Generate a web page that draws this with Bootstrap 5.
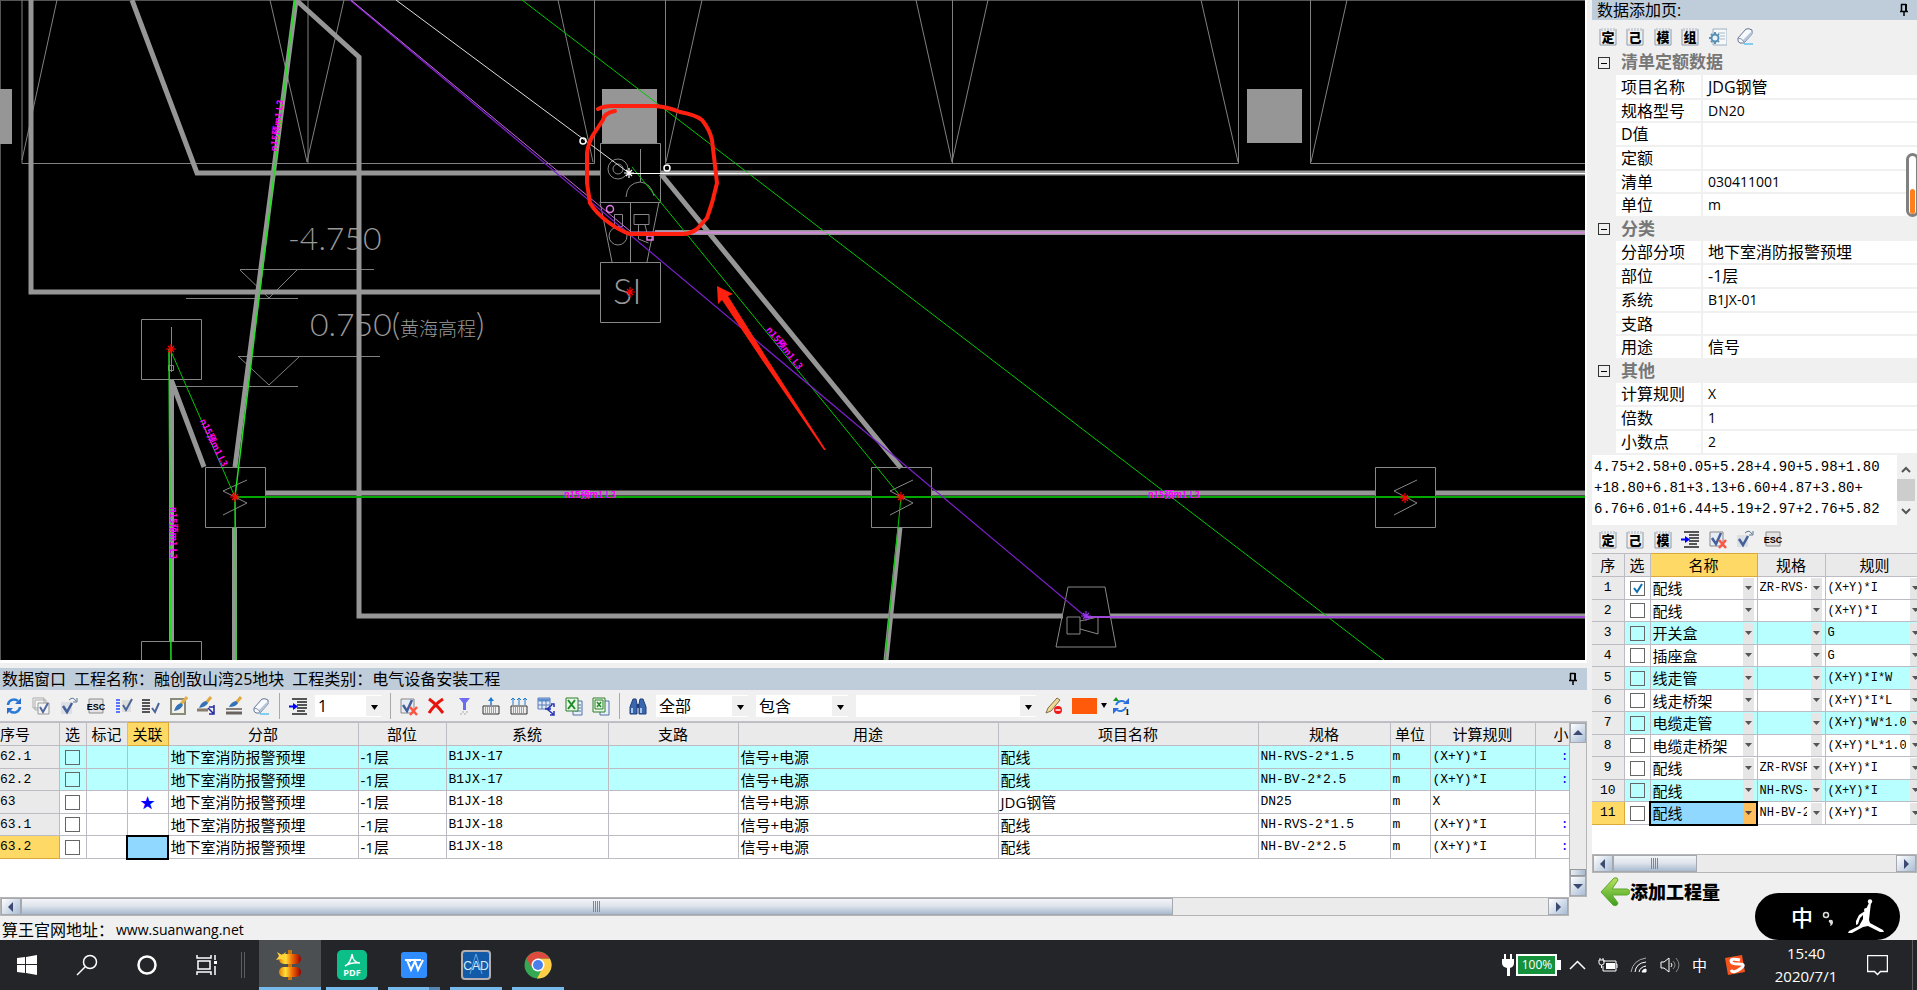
<!DOCTYPE html>
<html lang="zh-CN">
<head>
<meta charset="utf-8">
<meta name="viewport" content="width=device-width, initial-scale=1">
<title>算王 数据窗口</title>
<link href="https://cdn.jsdelivr.net/npm/bootstrap@5.3.0/dist/css/bootstrap.min.css" rel="stylesheet">
<style>
  body { font-family: "Open Sans", "Noto Sans CJK SC", sans-serif; font-size: 16px; line-height: 20px; color: #000; background: #f0f0f0; }
  .desk { height: 100vh; min-height: 700px; }
  .cad-view { background: #000; border-right: 2px solid #fff; border-bottom: 3px solid #fff; margin-bottom: 5px; min-height: 0; }
  .cad-view svg { display: block; width: 100%; height: 100%; }
  .left-dock { min-width: 0; }
  .right-dock { width: 325px; margin-left: 5px; background: #f0f0f0; overflow: hidden; }
  .dock-title { background: #bfcddb; height: 22px; padding: 0 2px; white-space: nowrap; }
  .right-dock .dock-title { height: 20px; padding: 0 5px; }
  .dock-title h2 { font-size: 16px; line-height: 20px; font-weight: 400; margin: 0; }
  .pin-btn { border: 0; background: none; padding: 0; width: 16px; height: 18px; line-height: 0; }
  .pin-btn svg { width: 10px; height: 14px; }

  .tool-row { height: 31px; }
  .right-dock .tool-row { padding-left: 2px; }
  .right-dock .mid-tools { height: 28px; }
  .tool-btn { border: 0; background: none; padding: 0; width: 27px; height: 26px; line-height: 0; border-radius: 2px; flex: none; }
  .tool-btn:nth-child(even) { width: 28px; }
  .tool-btn:hover { background: #d8e6f2; }
  .tool-btn svg { width: 18px; height: 20px; }
  .tool-split { width: 1px; height: 26px; background: #a8a8a8; flex: none; }
  .pick { appearance: none; border: 0; border-radius: 0; width: 92px; height: 22px; padding: 0 18px 0 3px; font-size: 16px; line-height: 20px; color: #000; flex: none;
    background: #fff url("data:image/svg+xml,%3Csvg xmlns='http://www.w3.org/2000/svg' width='16' height='20'%3E%3Crect width='16' height='20' fill='%23f0f0f0'/%3E%3Cpath d='M5 9h7l-3.500 5z'/%3E%3C/svg%3E") no-repeat right center; }
  .pick-s { width: 67px; }
  .pick-l { width: 180px; }
  .swatch { width: 25px; height: 16px; background: #ff5a0a; }
  .drop-tri { width: 0; height: 0; border: 3px solid transparent; border-top: 5px solid #000; border-bottom: 0; }

  .sheet { table-layout: fixed; border-collapse: collapse; color: #000; font-size: 15px; line-height: 18px; }
  .sheet th, .sheet td { border: 1px solid #bcbcc2; border-left-width: 0; padding: 0 0 0 2px; height: 22px; white-space: nowrap; overflow: hidden; font-weight: 400; }
  .sheet tr:nth-child(odd) > * { height: 23px; }
  .sheet thead th { background: #eaeaea; text-align: center; padding: 0; }
  .sheet tbody th { background: #eaeaea; }
  .sheet .num { font-family: "Liberation Mono", monospace; font-size: 13px; }
  .sheet .tint td { background: #b8ffff; }
  .sheet .hot, .sheet thead .hot { background: #ffd966; border-color: #d9a93a; }
  .sheet td.tick { padding: 0; text-align: center; }
  .sheet .focus-cell { background: #90d8ff !important; outline: 2px solid #000; outline-offset: -1px; }
  .sheet .star-mark { color: #00f; }
  .sheet .blue { color: #00f; text-align: right; }
  .sheet input[type=checkbox] { appearance: none; display: block; margin: 0 auto; width: 15px; height: 15px; border: 1px solid #666; background: transparent center no-repeat; }
  .sheet input[type=checkbox]:checked { background-color: #fff; background-image: url("data:image/svg+xml,%3Csvg xmlns='http://www.w3.org/2000/svg' width='13' height='13'%3E%3Cpath d='M3 6l3 4 5-8' fill='none' stroke='%230a70b0' stroke-width='2'/%3E%3C/svg%3E"); }
  .sheet-box { background: #fff; overflow: hidden; }
  .main-grid { height: 176px; border-top: 1px solid #c0c0c8; }

  .sb { background: #ebebeb; border: 1px solid #b5b5b5; flex: none; }
  .sb-v { width: 18px; }
  .sb-h { height: 19px; }
  .sb button { border: 1px solid #a5a8ae; padding: 0; line-height: 0; flex: none; background: linear-gradient(135deg, #fff, #a9bdd6); }
  .sb-v button { height: 20px; width: 100%; }
  .sb-h button { width: 20px; height: 100%; }
  .sb svg { width: 10px; height: 10px; fill: #3c4a72; }
  .thumb-h { background: linear-gradient(#f2f4f7, #dfe5ec 45%, #a8bacf); border: 1px solid #a5a8ae; }
  .thumb-v { height: 7px; background: linear-gradient(90deg, #e8edf3, #a8bacf); border: 1px solid #999; }
  .grip { width: 8px; height: 11px; background: repeating-linear-gradient(90deg, #7d8794 0 1px, transparent 1px 2px); }
  .corner { width: 18px; }
  .status-line { height: 24px; padding: 3px 2px 0; }
  .text-w { font-size: 14px; color: #000; text-decoration: none; margin-left: 2px; }

  .props { table-layout: fixed; border-collapse: collapse; width: 100%; font-size: 16px; line-height: 20px; }
  .props td, .props th { height: 24px; padding: 0 0 2px 5px; font-weight: 400; white-space: nowrap; overflow: hidden; }
  .props tr:nth-child(3n) > * { height: 23px; }
  .props td, .props th.key { background: #fff; border-bottom: 2px solid #f0f0f0; padding-bottom: 0; }
  .props td { border-left: 2px solid #f0f0f0; }
  .props .grp { font-weight: 700; color: #777; font-size: 17px; }
  .props .gut { background: #f0f0f0; padding: 0; text-align: center; border: 0; line-height: 0; }
  .props .val { font-size: 14px; }
  .fold { border: 1px solid #333; background: transparent; padding: 0; width: 12px; height: 12px; line-height: 0; display: inline-flex; align-items: center; justify-content: center; }
  .fold::before { content: ""; width: 6px; height: 1px; background: #000; }
  .calc { height: 70px; flex: none; }
  .calc textarea { border: 0; resize: none; overflow: hidden; padding: 2px 2px; font-family: "Liberation Mono", monospace; font-size: 14px; line-height: 21px; white-space: pre; min-width: 0; outline: 0; }
  .calc-bar { width: 20px; background: #f0f0f0; }
  .calc-bar i { display: block; width: 18px; height: 22px; background: #cdcdcd; }
  .calc-bar button { border: 0; background: none; padding: 0; width: 18px; height: 20px; line-height: 0; }
  .calc-bar svg { width: 10px; height: 7px; }
  .cell-pick { appearance: none; border: 0; border-radius: 0; width: 100%; height: 21px; padding: 0 18px 0 0; font-size: 15px; line-height: 20px; color: #000; display: block;
    background: transparent url("data:image/svg+xml,%3Csvg xmlns='http://www.w3.org/2000/svg' width='14' height='21'%3E%3Crect width='11' height='21' fill='%23e6e6e6'/%3E%3Cpath d='M2 8h7l-3.500 4z' fill='%23555'/%3E%3C/svg%3E") no-repeat right center; }
  .cell-pick.num { font-size: 12px !important; }
  .focus-cell .cell-pick { background-image: url("data:image/svg+xml,%3Csvg xmlns='http://www.w3.org/2000/svg' width='14' height='21'%3E%3Crect width='12' height='21' fill='%23ffbe5c'/%3E%3Cpath d='M2 8h7l-3.500 4z' fill='%23544'/%3E%3C/svg%3E"); }
  .side-grid { height: 301px; flex: none; }
  .side-table { width: 332px; }
  .side-thumb { width: 84px; }
  .add-btn { border: 0; background: none; padding: 0; font-weight: 900; font-size: 18px; line-height: 20px; color: #000; }
  .add-btn svg { width: 30px; height: 30px; }
  .ime-pill { width: 145px; height: 47px; right: 17px; bottom: 0; }
  .side-slider { width: 13px; height: 64px; right: -2px; top: 153px; border: 3px solid #808080; border-radius: 7px; background: #fff; line-height: 0; }
  .side-slider i { display: block; width: 5px; height: 25px; margin: 33px 1px 0; border-radius: 3px; background: #ff7f1e; }

  .taskbar { height: 50px; background: #232528; color: #fff; flex: none; }
  .taskbar button { border: 0; background: none; color: #fff; padding: 0; line-height: 0; flex: none; }
  .sys-group { margin-left: -3px; }
  .sys { width: 60px; height: 50px; }
  .sys svg { width: 22px; height: 22px; }
  .task-split { width: 4px; height: 26px; border: solid #5a5c5e; border-width: 0 1px; margin: 0 14px 0 4px; }
  .app { width: 62px; height: 50px; position: relative; }
  .app svg { width: 30px; height: 30px; }
  .app::after { content: ""; position: absolute; left: 5px; right: 5px; bottom: 0; height: 3px; background: #76b9ed; }
  .app.on { background: #4c4f52; }
  .app.on::after { left: 0; right: 0; }
  .app.multi::after { background: linear-gradient(90deg, #76b9ed 0 41px, #5585b0 41px); }
  .tray { height: 50px; }
  .tray svg { display: block; }
  .clock { font-size: 15px; line-height: 23px !important; width: 90px; }
  .han { font-size: 15px; line-height: 20px !important; }
</style>
</head>
<body>

<!-- shared toolbar glyphs -->
<svg width="0" height="0" class="position-absolute" aria-hidden="true">
  <defs>
    <symbol id="i-page" viewBox="0 0 18 20"><path d="M1 3h16v16H1z" fill="#eef0f3"/><path d="M1 3v16h16V3" fill="none" stroke="#8f9aa5"/><path d="M3 2v3M6 2v3M9 2v3M12 2v3M15 2v3" stroke="#a9b4c0"/></symbol>
    <symbol id="i-refresh" viewBox="0 0 18 20"><path d="M3 9a6 6 0 0 1 10-4M15 11a6 6 0 0 1-10 4" fill="none" stroke="#2a7ad8" stroke-width="2.500"/><path d="M16 2v6h-6zM2 18v-6h6z" fill="#2a6ccc"/></symbol>
    <symbol id="i-copychk" viewBox="0 0 18 20"><path d="M1 2h11v10H1zM3 4h11v10H3z" fill="#f6f6f6" stroke="#aaa"/><path d="M6 7h11v11H6z" fill="#f3f3f3" stroke="#999"/><path d="M8 11l3 5 5-9" fill="none" stroke="#5068a0" stroke-width="2"/></symbol>
    <symbol id="i-chkarrow" viewBox="0 0 18 20"><path d="M1 6h11v12H1z" fill="#dcdfe4"/><path d="M3 10l4 6 5-9" fill="none" stroke="#43609c" stroke-width="2.500"/><path d="M9 4q4-4 7 1M17 2v4h-4" fill="none" stroke="#5b7592"/></symbol>
    <symbol id="i-esc" viewBox="0 0 18 20"><path d="M2 3h14v14H2z" fill="#e4e2e2" stroke="#8d8d8d"/><text x="9" y="14" text-anchor="middle" font-family="Liberation Sans" font-weight="700" font-size="9">ESC</text></symbol>
    <symbol id="i-listchk" viewBox="0 0 18 20"><path d="M1 4h4M1 7h4M1 10h4M1 13h4M1 16h4" stroke="#2b4cff" stroke-width="1.500"/><path d="M7 4h9v12H7z" fill="#dedede"/><path d="M8 9l3 5 6-11" fill="none" stroke="#4b659b" stroke-width="2"/></symbol>
    <symbol id="i-listtick" viewBox="0 0 18 20"><path d="M0 4h8M0 7h8M0 10h8M0 13h8M0 16h8" stroke="#222" stroke-width="1.500"/><path d="M10 12l3 4 4-9" fill="none" stroke="#4b659b" stroke-width="2"/></symbol>
    <symbol id="i-brushdoc" viewBox="0 0 18 20"><path d="M1 3h14v15H1z" fill="#f2f2ea" stroke="#8b8b7b" stroke-width="2"/><path d="M17 1l-6 7" stroke="#e0b04c" stroke-width="3"/><path d="M11 7q-5 1-7 8 7-1 9-6z" fill="#3472b8"/></symbol>
    <symbol id="i-brushup" viewBox="0 0 18 20"><path d="M14 1L9 7" stroke="#e0a83c" stroke-width="3"/><path d="M9 5q-5 1-7 7 7-1 9-5z" fill="#3472b8"/><path d="M0 14h11" stroke="#887c6c" stroke-width="3"/><path d="M11 12l5 5M12 11h5M17 9v4M17 13v5h-5" stroke="#22299c" stroke-width="1.500" fill="none"/></symbol>
    <symbol id="i-brushlines" viewBox="0 0 18 20"><path d="M16 1l-5 6" stroke="#e0a83c" stroke-width="3"/><path d="M11 5Q6 6 4 11q7 0 9-4z" fill="#3472b8"/><path d="M1 13h16" stroke="#85807a" stroke-width="2"/><path d="M1 17h16" stroke="#6a6460" stroke-width="3"/></symbol>
    <symbol id="i-eraser" viewBox="0 0 18 20"><path d="M2 12L10 3q3-1 6 1l0 4-8 9H4q-3-1-2-5z" fill="#f8fafd" stroke="#5f7394"/><path d="M8 17l8-9V5l-9 9z" fill="#b4c4da"/><path d="M2 12q4 0 6 4" fill="none" stroke="#7f93ae"/><path d="M8 18h9" stroke="#15a8f0"/></symbol>
    <symbol id="i-indent" viewBox="0 0 18 20"><path d="M3 3h15M8 6h10M8 9h10M8 12h10M8 15h8M3 18h15" stroke="#222" stroke-width="1.500"/><path d="M0 10.500h6" stroke="#00f" stroke-width="2"/><path d="M4 7l5 3.500L4 14z" fill="#00f"/></symbol>
    <symbol id="i-chkx" viewBox="0 0 18 20"><path d="M1 3h13v14H1z" fill="#e6ecf4" stroke="#888"/><path d="M3 9l4 6 5-11" fill="none" stroke="#43609c" stroke-width="2.500"/><path d="M10 11l7 8M17 11l-7 8" stroke="#ff5540" stroke-width="2.500"/></symbol>
    <symbol id="i-redx" viewBox="0 0 18 20"><path d="M2 3q7 5 14 14M16 3Q8 8 2 17" fill="none" stroke="#e8140c" stroke-width="3"/></symbol>
    <symbol id="i-funnel" viewBox="0 0 18 20"><path d="M4 2h11l-4 5v7h-3V7z" fill="#6c6cf0"/><path d="M5 18h8M7 16h6" stroke="#aaa" stroke-dasharray="2"/></symbol>
    <symbol id="i-rowadd" viewBox="0 0 18 20"><path d="M1 10h16v8H1z" fill="#eee" stroke="#333"/><path d="M3 12h12M3 14h12M3 16h12" stroke="#555" stroke-dasharray="1"/><path d="M9 9V4" stroke="#1c7ad0" stroke-width="1.500"/><path d="M6 5l3-4 3 4z" fill="#1c7ad0"/></symbol>
    <symbol id="i-rowsadd" viewBox="0 0 18 20"><path d="M1 10h16v8H1z" fill="#eee" stroke="#333"/><path d="M3 12h12M3 14h12M3 16h12" stroke="#555" stroke-dasharray="1"/><path d="M3 9V2M9 9V2M15 9V2M1 4l2-2 2 2M7 4l2-2 2 2M13 4l2-2 2 2" fill="none" stroke="#1c7ad0"/></symbol>
    <symbol id="i-tablearrows" viewBox="0 0 18 20"><path d="M1 2h12v11H1z" fill="#dfe9f8" stroke="#5d7cb5"/><path d="M1 4h12" stroke="#5d8ed0" stroke-width="3"/><path d="M1 9h12M5 4v9M9 4v9" stroke="#5d7cb5"/><path d="M8 13h6M15 9l-5 4 6 5M14 8h3v3M17 15v4h-4" fill="none" stroke="#2733b5" stroke-width="1.500"/></symbol>
    <symbol id="i-excel" viewBox="0 0 18 20"><path d="M8 5h9v14H8z" fill="#e8f0ff" stroke="#5371a0"/><path d="M10 9h6M10 12h6M10 15h6" stroke="#5371a0"/><path d="M1 2h12v13H1z" fill="#e8f6e6" stroke="#2c7f2c"/><path d="M3 4l7 9M10 4l-7 9" stroke="#1e8a2a" stroke-width="2"/></symbol>
    <symbol id="i-excelx" viewBox="0 0 18 20"><path d="M8 5h9v14H8z" fill="#e8f0ff" stroke="#5371a0"/><path d="M1 2h12v14H1z" fill="#e8f6e6" stroke="#2c7f2c"/><path d="M3 4h8v9H3z" fill="none" stroke="#2c7f2c"/><path d="M5 6l4 5M9 6l-4 5" stroke="#1e8a2a" stroke-width="1.500"/></symbol>
    <symbol id="i-binoc" viewBox="0 0 18 20"><path d="M4 3h3l1 5v10H1v-7zM11 3h3l3 8v7h-7V8z" fill="#3a66ad" stroke="#1e3f7a"/><path d="M8 8h2v4H8z" fill="#1e3f7a"/><path d="M3 12v5M12 12v5" stroke="#a9c6ee" stroke-width="2"/></symbol>
    <symbol id="i-pencil" viewBox="0 0 18 20"><path d="M1 17l2-5 9-10 3 2-9 11z" fill="#f0d890" stroke="#7d7050"/><circle cx="13" cy="14" r="4" fill="#f01818"/><path d="M10.500 14h5" stroke="#fff" stroke-width="1.500"/></symbol>
    <symbol id="i-swap" viewBox="0 0 18 20"><path d="M4 9a6 6 0 0 1 9-3M14 11a6 6 0 0 1-9 3" fill="none" stroke="#2b7ae0" stroke-width="2"/><path d="M17 2v6h-6zM1 18v-6h6z" fill="#2b6ae0"/><path d="M1 5l3-4 3 4z" fill="#1d9520"/><text x="13" y="19" font-size="9" font-weight="700" font-family="Liberation Serif">1</text></symbol>
    <symbol id="i-gearpage" viewBox="0 0 18 20"><path d="M4 3h14v16H4z" fill="#f6f8fa" stroke="#9db0c0"/><path d="M9 7h7M11 10h5M11 13h5" stroke="#a5bccd"/><circle cx="6" cy="12" r="3.500" fill="#e8f2fa" stroke="#5a8fb4" stroke-width="2"/><path d="M6 6v2M6 16v2M0 12h2M2 8l1 1M2 16l1-1M10 8L9 9M10 16l-1-1" stroke="#5a8fb4" stroke-width="2"/></symbol>
    <symbol id="i-pin" viewBox="0 0 10 14"><path d="M2.500 1v7M2 1.500h5M1 8.500h8M5 9v4" fill="none" stroke="#000" stroke-width="1.500"/><path d="M6 1h2v7H6z"/></symbol>
    <symbol id="i-l" viewBox="0 0 10 10"><path d="M7 0v10L2 5z"/></symbol>
    <symbol id="i-r" viewBox="0 0 10 10"><path d="M3 0v10l5-5z"/></symbol>
    <symbol id="i-u" viewBox="0 0 10 10"><path d="M0 7h10L5 2z"/></symbol>
    <symbol id="i-d" viewBox="0 0 10 10"><path d="M0 3h10L5 8z"/></symbol>
    <symbol id="star" viewBox="-6 -6 12 12" overflow="visible"><path d="M-5 0h10M0-5v10M-3-3l6 6M3-3l-6 6"/></symbol>
  </defs>
</svg>

<div class="desk d-flex flex-column">
  <div class="d-flex flex-fill" style="min-height:0">

    <main class="left-dock d-flex flex-column flex-fill">
      <div class="cad-view flex-fill">
        <svg viewBox="0 0 1585 660" preserveAspectRatio="xMinYMin slice" role="img" aria-label="消防报警平面图">
          <path d="M0 .5H1585M.5 0V660" stroke="#555"/>
          <g fill="none" stroke="#808080">
            <path d="M22 0V163.500H594.500V0M57 0L22 160M308 0V163M270 0L307 162L344 0M558 0L593 162"/>
            <path d="M665.500 0V163.500H1238.500V0M702 0L666 162M952.500 0V163M916 0L952 162L988 0M1201 0L1238 162"/>
            <path d="M1585 163.500H1310.500V0M1347 0L1311 162"/>
            <path d="M240 269.500H374M240 270L269 298L297 270M186 298.500H298M238 356.500H380M239 357L269 385L299 357M175 386.500H298"/>
          </g>
          <path d="M0 89h12v55H0zM602 89h55v54h-55zM1247 89h55v54h-55z" fill="#969696"/>
          <g fill="none" stroke="#969696" stroke-width="5">
            <path d="M31 0V292H600M132 0L197 173H600M296 0L359 57V616H1063M1110 616H1585"/>
            <path d="M296 0L235 467M265 493H871M931 493H1375M1435 493H1585M234.500 527V660M171.500 380V641M172 382L204 467"/>
            <path d="M660 173H1585M655 232.500H1585M661 174L901 468M900 527L886 660"/>
          </g>
          <g fill="none" stroke="#888">
            <path d="M141.500 319.500h60v60h-60zM141.500 660V641.500h60V660M171.500 327V372M168.500 365.500h5v5h-5z"/>
            <path d="M205.500 467.500h60v60h-60zM871.500 467.500h60v60h-60zM1375.500 467.500h60v60h-60z"/>
            <path d="M247 480L223 491L247 503L223 515M913 480L890 491L913 503L890 515M1417 480L1394 491L1417 503L1394 515"/>
            <path d="M600.500 143.500h60v59h-60zM600 202L612 262M659 202L647 262M630.500 202V262M600.500 262.500h60v60h-60z"/>
            <circle cx="618" cy="169" r="10"/><circle cx="618" cy="169" r="5"/>
            <path d="M640.500 149V182M626 197Q627 183 640 182Q651 183 654 196"/>
            <circle cx="618" cy="236" r="9"/><path d="M614.500 214.500h8v12h-8zM634 214.500h15v10h-15zM638.500 225v14l10 4M645 225l3 12"/>
            <path d="M1068 587H1105L1116 647H1056zM1067 617h13v17h-13zM1080 621L1098 617V634L1080 629"/>
          </g>
          <g fill="none">
            <path d="M522 0L1384 660M632 167L901 497L885 660M170 349L235 497" stroke="#00c800"/>
            <path d="M295 0L235 497L236 660M169 349L171 660" stroke="#20e020" stroke-width="1.500"/>
            <path d="M235 497H1585" stroke="#00a800" stroke-width="2"/>
          </g>
          <path d="M350 0L1086 617" stroke="#7c20cc" stroke-width="1.200"/>
          <path d="M351 0L630 231" stroke="#c968e0"/>
          <path d="M1086 617H1585" stroke="#a04ad8" stroke-width="2"/>
          <path d="M630 232.500H1585" stroke="#d988e0" stroke-width="2"/>
          <path d="M396 0L629 173" stroke="#ddd"/><path d="M629 173.500H1585" stroke="#fff"/>
          <g fill="none" stroke-width="1.500"><circle cx="583" cy="141" r="3" stroke="#fff"/><circle cx="667" cy="168" r="3" stroke="#fff"/><circle cx="610" cy="209" r="3.500" stroke="#e37de6"/><path d="M647 236h6v4h-6z" stroke="#e37de6"/></g>
          <g fill="#999" font-family="Lato" font-weight="300">
            <text x="288" y="250" font-size="32">-4.750</text>
            <text x="310" y="336" font-size="32">0.750(<tspan font-family="Noto Sans CJK SC" font-size="19">黄海高程</tspan>)</text>
            <text x="613" y="304" font-size="36">SI</text>
          </g>
          <g stroke="#f00" stroke-width="1.200">
            <use href="#star" x="165" y="343" width="12" height="12"/><use href="#star" x="229" y="491" width="12" height="12"/>
            <use href="#star" x="895" y="491" width="12" height="12"/><use href="#star" x="1399" y="492" width="12" height="12"/>
            <use href="#star" x="624" y="286" width="12" height="12"/>
            <use href="#star" x="623" y="167" width="12" height="12" stroke="#fff"/><use href="#star" x="1080" y="610" width="12" height="12" stroke="#9a35f0"/>
          </g>
          <g fill="#f0f" font-size="9" font-weight="700" font-family="Noto Sans CJK SC" text-anchor="middle">
            <text transform="translate(280 126) rotate(-82)">n15预m1 L3</text>
            <text transform="translate(211 444) rotate(64)">n15预m1 L3</text>
            <text transform="translate(170 533) rotate(90)">n15预m1 L3</text>
            <text x="590" y="498">n15预m1 L3</text>
            <text x="1174" y="498">n15预m1 L3</text>
            <text transform="translate(782 350) rotate(51)">n15预m1 L3</text>
          </g>
          <path d="M598 109Q604 106 612 106H655Q668 107 680 112Q696 115 702 120Q710 130 712 140L714 157L717 183L712 203L707 218L697 229Q690 234 683 234H630Q620 231 608 222Q596 213 590 203L587 183V153Q588 144 593 135L603 120Q604 113 615 111" fill="none" stroke="#ff2010" stroke-width="4" stroke-linecap="round" stroke-linejoin="round"/>
          <path d="M717 286L733 294L728 296L768 360L826 450L824 450L762 360L722 300L718 304z" fill="#ff2010"/>
        </svg>
      </div>

      <section class="flex-shrink-0">
        <div class="dock-title d-flex align-items-center">
          <h2 class="d-flex gap-2"><span>数据窗口</span><span>工程名称：融创敔山湾25地块</span><span>工程类别：电气设备安装工程</span></h2>
          <button class="pin-btn ms-auto me-1" aria-label="固定"><svg><use href="#i-pin"/></svg></button>
        </div>

        <div class="tool-row d-flex align-items-center">
          <div class="d-flex">
            <button class="tool-btn" aria-label="刷新"><svg><use href="#i-refresh"/></svg></button>
            <button class="tool-btn" aria-label="全选"><svg><use href="#i-copychk"/></svg></button>
            <button class="tool-btn" aria-label="反选"><svg><use href="#i-chkarrow"/></svg></button>
            <button class="tool-btn" aria-label="取消"><svg><use href="#i-esc"/></svg></button>
            <button class="tool-btn" aria-label="选列表"><svg><use href="#i-listchk"/></svg></button>
            <button class="tool-btn" aria-label="选行"><svg><use href="#i-listtick"/></svg></button>
            <button class="tool-btn" aria-label="刷表"><svg><use href="#i-brushdoc"/></svg></button>
            <button class="tool-btn" aria-label="刷格式"><svg><use href="#i-brushup"/></svg></button>
            <button class="tool-btn" aria-label="刷行"><svg><use href="#i-brushlines"/></svg></button>
            <button class="tool-btn" aria-label="清除"><svg><use href="#i-eraser"/></svg></button>
          </div>
          <span class="tool-split mx-1"></span>
          <button class="tool-btn" aria-label="层级"><svg><use href="#i-indent"/></svg></button>
          <select class="pick pick-s ms-1" aria-label="层级数"><option>1</option></select>
          <span class="tool-split ms-2"></span>
          <div class="d-flex ms-1">
            <button class="tool-btn" aria-label="删除勾选"><svg><use href="#i-chkx"/></svg></button>
            <button class="tool-btn" aria-label="删除"><svg><use href="#i-redx"/></svg></button>
            <button class="tool-btn" aria-label="筛选"><svg><use href="#i-funnel"/></svg></button>
            <button class="tool-btn" aria-label="插入行"><svg><use href="#i-rowadd"/></svg></button>
            <button class="tool-btn" aria-label="插入多行"><svg><use href="#i-rowsadd"/></svg></button>
            <button class="tool-btn" aria-label="汇总"><svg><use href="#i-tablearrows"/></svg></button>
            <button class="tool-btn" aria-label="导出"><svg><use href="#i-excel"/></svg></button>
            <button class="tool-btn" aria-label="导入"><svg><use href="#i-excelx"/></svg></button>
          </div>
          <span class="tool-split ms-1"></span>
          <button class="tool-btn ms-1" aria-label="查找"><svg><use href="#i-binoc"/></svg></button>
          <select class="pick ms-1" aria-label="范围"><option>全部</option></select>
          <select class="pick ms-2" aria-label="条件"><option>包含</option></select>
          <select class="pick pick-l ms-2" aria-label="内容"><option></option></select>
          <button class="tool-btn ms-1" aria-label="清除标色"><svg><use href="#i-pencil"/></svg></button>
          <button class="tool-btn d-flex align-items-center gap-1 ms-1 w-auto" aria-label="颜色"><span class="swatch"></span><span class="drop-tri"></span></button>
          <button class="tool-btn" aria-label="替换"><svg><use href="#i-swap"/></svg></button>
        </div>

        <div class="main-grid d-flex">
          <div class="sheet-box flex-fill">
            <table class="sheet w-100">
              <colgroup><col style="width:59px"><col style="width:27px"><col style="width:41px"><col style="width:41px"><col style="width:190px"><col style="width:88px"><col style="width:162px"><col style="width:130px"><col style="width:260px"><col style="width:260px"><col style="width:132px"><col style="width:40px"><col style="width:105px"><col style="width:34px"></colgroup>
              <thead><tr><th class="text-start">序号</th><th>选</th><th>标记</th><th class="hot">关联</th><th>分部</th><th>部位</th><th>系统</th><th>支路</th><th>用途</th><th>项目名称</th><th>规格</th><th>单位</th><th>计算规则</th><th class="text-end">小</th></tr></thead>
              <tbody id="mainRows"></tbody>
            </table>
          </div>
          <div class="sb sb-v d-flex flex-column">
            <button aria-label="上"><svg><use href="#i-u"/></svg></button>
            <div class="thumb-v mt-auto"></div>
            <button aria-label="下"><svg><use href="#i-d"/></svg></button>
          </div>
        </div>
        <div class="d-flex">
          <div class="sb sb-h d-flex flex-fill">
            <button aria-label="左"><svg><use href="#i-l"/></svg></button>
            <div class="thumb-h d-flex align-items-center justify-content-center" style="width:73.5%"><span class="grip"></span></div>
            <button class="ms-auto" aria-label="右"><svg><use href="#i-r"/></svg></button>
          </div>
          <div class="corner"></div>
        </div>
        <footer class="status-line d-flex align-items-center">算王官网地址：<a class="text-w" href="#">www.suanwang.net</a></footer>
      </section>
    </main>

    <aside class="right-dock d-flex flex-column position-relative flex-shrink-0">
      <div class="dock-title d-flex align-items-center flex-shrink-0"><h2>数据添加页:</h2><button class="pin-btn ms-auto" aria-label="固定"><svg><use href="#i-pin"/></svg></button></div>
      <div class="tool-row d-flex align-items-center flex-shrink-0" id="topTools"></div>

      <table class="props flex-shrink-0">
        <colgroup><col style="width:24px"><col style="width:86px"><col></colgroup>
        <tbody id="props"></tbody>
      </table>

      <div class="calc d-flex bg-white">
        <textarea class="flex-fill" aria-label="计算式" wrap="off">4.75+2.58+0.05+5.28+4.90+5.98+1.80
+18.80+6.81+3.13+6.60+4.87+3.80+
6.76+6.01+6.44+5.19+2.97+2.76+5.82</textarea>
        <div class="calc-bar d-flex flex-column">
          <button class="mt-1" aria-label="上"><svg viewBox="0 0 10 7"><path d="M1 6l4-4 4 4" fill="none" stroke="#555" stroke-width="2"/></svg></button>
          <i></i>
          <button aria-label="下"><svg viewBox="0 0 10 7"><path d="M1 1l4 4 4-4" fill="none" stroke="#555" stroke-width="2"/></svg></button>
        </div>
      </div>
      <div class="tool-row mid-tools d-flex align-items-center flex-shrink-0" id="midTools"></div>

      <div class="side-grid sheet-box">
        <table class="sheet side-table">
          <colgroup><col style="width:32px"><col style="width:26px"><col style="width:107px"><col style="width:68px"><col style="width:99px"></colgroup>
          <thead><tr><th>序</th><th>选</th><th class="hot">名称</th><th>规格</th><th>规则</th></tr></thead>
          <tbody id="sideRows"></tbody>
        </table>
      </div>
      <div class="sb sb-h d-flex">
        <button aria-label="左"><svg><use href="#i-l"/></svg></button>
        <div class="thumb-h side-thumb d-flex align-items-center justify-content-center"><span class="grip"></span></div>
        <button class="ms-auto" aria-label="右"><svg><use href="#i-r"/></svg></button>
      </div>
      <div class="px-2 pt-1">
        <button class="add-btn d-flex align-items-center"><svg viewBox="0 0 30 30"><defs><linearGradient id="leaf" x2="0" y2="1"><stop stop-color="#b9e463"/><stop offset="1" stop-color="#3f9d1e"/></linearGradient></defs><path d="M1 15L14 1q4-1 4 2L12 12H27q3 1 3 3t-3 3H12l6 8q-1 4-5 2z" fill="url(#leaf)" stroke="#5da52c"/></svg>添加工程量</button>
      </div>

      <div class="side-slider position-absolute"><i></i></div>
      <svg class="ime-pill position-absolute" viewBox="0 0 145 47" aria-label="输入法">
        <rect width="145" height="47" rx="23.500"/>
        <text x="36" y="33" font-size="22" font-weight="500" fill="#fff" font-family="Noto Sans CJK SC">中</text>
        <circle cx="71" cy="22" r="2.500" fill="none" stroke="#ddd" stroke-width="1.500"/><path d="M74 27q4-1 4 2 0 3-3 4 1-2 0-3-2-1-1-3z" fill="#ddd"/>
        <circle cx="115" cy="8.500" r="2.200" fill="#fff"/><circle cx="111" cy="17" r="2" fill="#fff"/>
        <path d="M114 10h2l-1 8-1 9 1 3 13 7 1 2-4 0-12-6-5 1-11 6-4 0 1-2 10-5 4-7 0-4-3 3-2 6-2 1 0-4 3-6 6-4z" fill="#fff"/>
      </svg>
    </aside>
  </div>

  <nav class="taskbar d-flex align-items-center" aria-label="任务栏">
    <div class="sys-group d-flex">
      <button class="sys" aria-label="开始"><svg viewBox="0 0 22 22"><path d="M1 4l8-1v7H1zM10 3l11-2v9H10zM1 11h8v8l-8-1zM10 11h11v10l-11-2z" fill="#fff"/></svg></button>
      <button class="sys" aria-label="搜索"><svg viewBox="0 0 22 22" fill="none" stroke="#fff" stroke-width="1.500"><circle cx="14" cy="8" r="6.500"/><path d="M9 13l-8 8"/></svg></button>
      <button class="sys" aria-label="小娜"><svg viewBox="0 0 22 22" fill="none" stroke="#fff" stroke-width="2.500"><circle cx="11" cy="11" r="8.500"/></svg></button>
      <button class="sys" aria-label="任务视图"><svg viewBox="0 0 22 22" fill="none" stroke="#fff" stroke-width="1.500"><path d="M1 1v3h14V1M1 21v-3h14v3M2 7h12v8H2zM19 1v5M19 12v9"/><path d="M18 7h3v3h-3z" fill="#fff" stroke="none"/></svg></button>
    </div>
    <span class="task-split"></span>
    <button class="app on" aria-label="算王"><svg viewBox="0 0 30 30"><defs><linearGradient id="drum"><stop stop-color="#e58000"/><stop offset=".3" stop-color="#ffe03a"/><stop offset=".6" stop-color="#f06a00"/><stop offset="1" stop-color="#900"/></linearGradient></defs><path d="M15 0v30" stroke="#c8780a" stroke-width="4"/><rect x="4" y="4" width="22" height="10" rx="5" fill="url(#drum)"/><rect x="4" y="17" width="22" height="10" rx="5" fill="url(#drum)"/><path d="M2 2l5 3 4-3-2 5 2 5-5-3-5 1 3-4z" fill="#ffd23a"/></svg></button>
    <button class="app" aria-label="PDF"><svg viewBox="0 0 30 30"><rect width="30" height="30" rx="5" fill="#0cbf89"/><path d="M8 16q6-3 7-12 1 9 8 9-9-1-15 3z" fill="none" stroke="#fff" stroke-width="1.500"/><text x="15" y="26" text-anchor="middle" font-size="9" font-weight="700" fill="#fff" font-family="Open Sans">PDF</text></svg></button>
    <button class="app multi" aria-label="WPS"><svg viewBox="0 0 30 30"><rect x="2" y="2" width="26" height="26" rx="3" fill="#2f8dff"/><path d="M6 10h16M8 10l4 10 4-9 3 9 5-10M12 11l-2 0" fill="none" stroke="#fff" stroke-width="2"/></svg></button>
    <button class="app" aria-label="CAD"><svg viewBox="0 0 30 30"><rect x="1" y="1" width="28" height="28" rx="3" fill="#135ba8" stroke="#b5aeb0" stroke-width="2"/><path d="M15 4l-6 20M15 4l6 20" stroke="#5fa5e0"/><text x="15" y="20" text-anchor="middle" font-size="12" fill="#d8ebff" font-family="Liberation Sans">CAD</text></svg></button>
    <button class="app" aria-label="Chrome"><svg viewBox="0 0 30 30"><circle cx="15" cy="15" r="13.500" fill="#34a853"/><path d="M15 8.500H26.800A13.500 13.500 0 0 1 14 28.500L20 17z" fill="#ffcd46"/><path d="M3.300 8.300A13.500 13.500 0 0 1 26.700 8.500H15L9 18z" fill="#dd4b3e"/><circle cx="15" cy="15" r="6.500" fill="#fff"/><circle cx="15" cy="15" r="5" fill="#4a80ee"/></svg></button>

    <div class="tray d-flex align-items-center ms-auto">
      <svg class="me-2" width="59" height="24" viewBox="0 0 59 24"><path d="M3 1v5M9 1v5" stroke="#fff" stroke-width="2"/><path d="M0 6h12v4q0 4-4 5v8H5v-8q-5-1-5-5z" fill="#fff"/><path d="M15 2h39v20H15zM56 8h2v8h-2z" fill="#15913c" stroke="#fff" stroke-width="2"/><text x="35" y="16" text-anchor="middle" font-size="12" fill="#fff" font-family="Open Sans">100%</text></svg>
      <button aria-label="显示隐藏的图标" class="me-2"><svg width="17" height="10" viewBox="0 0 17 10"><path d="M1 9l7.500-7.500L16 9" fill="none" stroke="#fff" stroke-width="1.500"/></svg></button>
      <svg class="ms-1 me-2" width="20" height="14" viewBox="0 0 20 14"><path d="M5 3h13v10H5V8M18 6h1v4M1 2h5v3q0 2-2.500 2T1 5zM2 0v2M5 0v2M3.500 7v3" fill="none" stroke="#fff"/><path d="M8 5h9v6H8z" fill="#fff"/></svg>
      <svg class="ms-1 me-2" width="18" height="16" viewBox="0 0 18 16" fill="none" stroke="#fff"><path d="M1 15Q3 3 16 1" stroke="#aaa"/><path d="M5 15Q6 6 16 5M9 15q1-5 7-6"/><path d="M12 15q1-3 4-3v3z" fill="#fff"/></svg>
      <svg class="ms-1 me-2" width="20" height="16" viewBox="0 0 20 16" fill="none" stroke="#fff"><path d="M1 5h3l5-4v14l-5-4H1z"/><path d="M11 6q2 2 0 4"/><path d="M13 4q4 4 0 8M16 1q6 7 0 14" stroke="#888"/></svg>
      <button class="han ms-1 me-3">中</button>
      <svg width="22" height="20" viewBox="0 0 22 20"><path d="M2 3l17-3 3 17-17 3z" fill="#f8521c"/><path d="M17 5q-9-2-9 1t8 3 1 5-9 1" fill="none" stroke="#fff" stroke-width="3"/></svg>
      <button class="clock ms-3 text-center">15:40<br>2020/7/1</button>
      <button aria-label="通知" class="ms-3 me-4"><svg width="21" height="21" viewBox="0 0 21 21"><path d="M.5.5h20v16h-7l-3 3-3-3h-7z" fill="none" stroke="#fff" stroke-width="1.500"/></svg></button>
      <span class="vr me-1"></span>
    </div>
  </nav>
</div>

<script src="https://cdn.jsdelivr.net/npm/bootstrap@5.3.0/dist/js/bootstrap.bundle.min.js"></script>
<script>
  const byId = id => document.getElementById(id);
  const han = s => /[\u4e00-\u9fff★]/.test(s);

  // 数据窗口
  const main = [
    ['62.1', '', 'B1JX-17', '配线', 'NH-RVS-2*1.5', '(X+Y)*I', 1],
    ['62.2', '', 'B1JX-17', '配线', 'NH-BV-2*2.5', '(X+Y)*I', 1],
    ['63', '★', 'B1JX-18', 'JDG钢管', 'DN25', 'X', 0],
    ['63.1', '', 'B1JX-18', '配线', 'NH-RVS-2*1.5', '(X+Y)*I', 0],
    ['63.2', '', 'B1JX-18', '配线', 'NH-BV-2*2.5', '(X+Y)*I', 0]
  ];
  byId('mainRows').innerHTML = main.map(([no, star, sys, item, spec, rule, tint], i) => `
    <tr class="${tint ? 'tint' : ''}"><th class="num ps-0 ${i === 4 ? 'hot' : ''}">${no}</th>
    <td class="tick"><input type="checkbox" aria-label="选 ${no}"></td><td></td>
    <td class="tick star-mark ${i === 4 ? 'focus-cell' : ''}">${star}</td>
    <td>地下室消防报警预埋</td><td>-1层</td><td class="num">${sys}</td><td></td><td>信号+电源</td>
    <td>${item}</td><td class="num">${spec}</td><td class="num">m</td><td class="num">${rule}</td>
    <td class="num blue">${rule === 'X' ? '' : ':'}</td></tr>`).join('');

  // 属性表：单元素为分组标题
  const props = [['清单定额数据'], ['项目名称', 'JDG钢管'], ['规格型号', 'DN20'], ['D值', ''], ['定额', ''], ['清单', '030411001'], ['单位', 'm'],
    ['分类'], ['分部分项', '地下室消防报警预埋'], ['部位', '-1层'], ['系统', 'B1JX-01'], ['支路', ''], ['用途', '信号'],
    ['其他'], ['计算规则', 'X'], ['倍数', '1'], ['小数点', '2']];
  byId('props').innerHTML = props.map(([k, v]) => v === undefined
    ? `<tr><th class="gut"><button class="fold" aria-label="折叠${k}"></button></th><th colspan="2" class="grp">${k}</th></tr>`
    : `<tr><th class="gut"></th><th class="key">${k}</th><td class="${han(v) ? '' : 'val'}">${v}</td></tr>`).join('');

  // 右侧工具条
  const page = c => `<button class="tool-btn" aria-label="${c}"><svg viewBox="0 0 18 20"><use href="#i-page"/><text x="9" y="16" text-anchor="middle" font-family="Noto Sans CJK SC" font-weight="900" font-size="13">${c}</text></svg></button>`;
  const icon = (id, name) => `<button class="tool-btn" aria-label="${name}"><svg><use href="#${id}"/></svg></button>`;
  byId('topTools').innerHTML = [...'定己模组'].map(page).join('') + icon('i-gearpage', '设置') + icon('i-eraser', '清除');
  byId('midTools').innerHTML = [...'定己模'].map(page).join('') + icon('i-indent', '层级') + icon('i-chkx', '删除勾选') + icon('i-chkarrow', '反选') + icon('i-esc', '取消');

  // 工程量表
  const side = [['配线', 'ZR-RVS-', '(X+Y)*I'], ['配线', '', '(X+Y)*I'], ['开关盒', '', 'G', 1], ['插座盒', '', 'G'], ['线走管', '', '(X+Y)*I*W', 1],
    ['线走桥架', '', '(X+Y)*I*L'], ['电缆走管', '', '(X+Y)*W*1.025', 1], ['电缆走桥架', '', '(X+Y)*L*1.025'], ['配线', 'ZR-RVSP', '(X+Y)*I'],
    ['配线', 'NH-RVS-', '(X+Y)*I', 1], ['配线', 'NH-BV-2', '(X+Y)*I']];
  const pick = (v, label) => `<select class="cell-pick ${han(v) ? '' : 'num'}" aria-label="${label}"><option>${v}</option></select>`;
  byId('sideRows').innerHTML = side.map(([n, s, r, tint], i) => `
    <tr class="${tint ? 'tint' : ''}"><th class="num text-center ps-0 ${i === 10 ? 'hot' : ''}">${i + 1}</th>
    <td class="tick"><input type="checkbox" ${i ? '' : 'checked'} aria-label="选 ${i + 1}"></td>
    <td class="py-0 ${i === 10 ? 'focus-cell' : ''}">${pick(n, '名称')}</td><td>${pick(s, '规格')}</td><td>${pick(r, '规则')}</td></tr>`).join('');
</script>
</body>
</html>
